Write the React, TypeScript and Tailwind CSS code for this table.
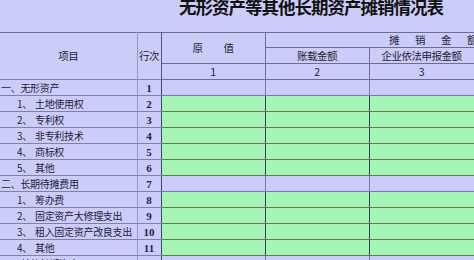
import React from 'react'

const rows = [
  { label: '一、无形资产', no: '1', level: 0 },
  { label: '土地使用权', prefix: '1、', no: '2', level: 1 },
  { label: '专利权', prefix: '2、', no: '3', level: 1 },
  { label: '非专利技术', prefix: '3、', no: '4', level: 1 },
  { label: '商标权', prefix: '4、', no: '5', level: 1 },
  { label: '其他', prefix: '5、', no: '6', level: 1 },
  { label: '二、长期待摊费用', no: '7', level: 0 },
  { label: '筹办费', prefix: '1、', no: '8', level: 1 },
  { label: '固定资产大修理支出', prefix: '2、', no: '9', level: 1 },
  { label: '租入固定资产改良支出', prefix: '3、', no: '10', level: 1 },
  { label: '其他', prefix: '4、', no: '11', level: 1 },
  { label: '三、其他长期资产', no: '12', level: 0 },
]

const cjk = "font-['Noto_Sans_CJK_SC',sans-serif]"

export default function App() {
  return (
    <div className={`w-[474px] h-[260px] overflow-hidden bg-[#ccccf8] text-[#1c1c38] ${cjk}`}>
      {/* Title */}
      <div className="h-[35px] pl-[179px]">
        <div className="-mt-[3px] text-[17.5px] leading-[20px] font-bold tracking-[-1px] text-[#111]">
          无形资产等其他长期资产摊销情况表
        </div>
      </div>

      <table className="w-[601px] table-fixed border-collapse text-[10.5px] tracking-[-0.5px]">
        <colgroup>
          <col className="w-[137px]" />
          <col className="w-[24px]" />
          <col className="w-[104px]" />
          <col className="w-[104px]" />
          <col className="w-[105px]" />
          <col className="w-[127px]" />
        </colgroup>
        <thead>
          <tr className="h-[15px]">
            <th rowSpan={3} className="border-t border-r border-t-[#6c6c96] border-r-[#9a9ac0] font-normal">
              项目
            </th>
            <th rowSpan={3} className="border-t border-r border-t-[#6c6c96] border-r-[#55557a] font-normal">
              行次
            </th>
            <th rowSpan={2} className="border border-[#6c6c96] font-normal">
              <div className="flex justify-center gap-[21px]">
                <span>原</span>
                <span>值</span>
              </div>
            </th>
            <th colSpan={3} className="border border-[#6c6c96] font-normal">
              <div className="flex justify-center gap-[16px] leading-[14px]">
                <span>摊</span>
                <span>销</span>
                <span>金</span>
                <span>额</span>
              </div>
            </th>
          </tr>
          <tr className="h-[16px]">
            <th className="border border-[#6c6c96] font-normal leading-[14px]">账载金额</th>
            <th className="border border-[#6c6c96] font-normal leading-[14px]">企业依法申报金额</th>
            <th className="border border-[#6c6c96] font-normal leading-[14px]">税收金额</th>
          </tr>
          <tr className="h-[16px]">
            <th className="border border-[#6c6c96] font-normal leading-[14px]">1</th>
            <th className="border border-[#6c6c96] font-normal leading-[14px]">2</th>
            <th className="border border-[#6c6c96] font-normal leading-[14px]">3</th>
            <th className="border border-[#6c6c96] font-normal leading-[14px]">4</th>
          </tr>
        </thead>
        <tbody>
          {rows.map((r) => {
            const head = r.level === 0
            const amount = head
              ? 'border border-[#7a7aa2] bg-[#ccccf8]'
              : 'border-y border-y-[#5f7a66] border-x border-x-[#3c3c4c] bg-[#a6f4b6]'
            return (
              <tr key={r.no} className="h-[16px]">
                <td className="border-y border-r border-y-[#8080a8] border-r-[#9a9ac0] p-0 text-[10px] leading-[14px] tracking-[-0.3px] whitespace-nowrap overflow-hidden">
                  {head ? (
                    <span className="pl-[1px]">{r.label}</span>
                  ) : (
                    <span className="pl-[17px]">
                      <span className="mr-[3px]">{r.prefix}</span>
                      {r.label}
                    </span>
                  )}
                </td>
                <td className="border-y border-r border-y-[#8080a8] border-r-[#44446a] p-0 text-center leading-[14px] font-['Liberation_Serif',serif] text-[11px] font-semibold text-[#22224a] tracking-normal">
                  {r.no}
                </td>
                <td className={amount} />
                <td className={amount} />
                <td className={amount} />
                <td className={amount} />
              </tr>
            )
          })}
        </tbody>
      </table>
    </div>
  )
}
